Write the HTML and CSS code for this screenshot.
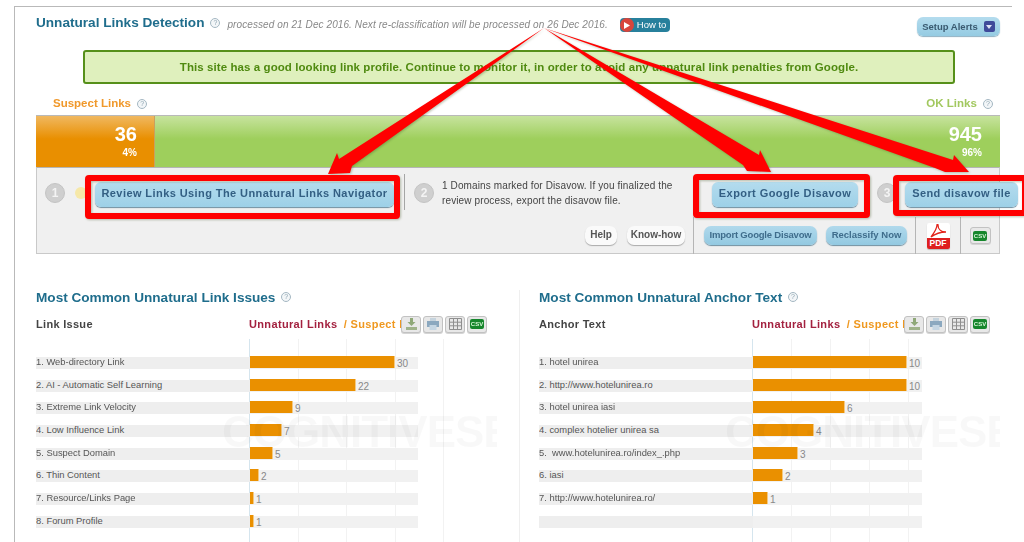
FILE: index.html
```html
<!DOCTYPE html>
<html lang="en">
<head>
<meta charset="utf-8">
<title>Unnatural Links Detection</title>
<link rel="stylesheet" href="styles.css">
</head>
<body>
<div class="page">
  <div class="frame">
    <header class="head">
      <h1 class="title">Unnatural Links Detection</h1>
      <span class="q q-title">?</span>
      <span class="processed">processed on 21 Dec 2016. Next re-classification will be processed on 26 Dec 2016.</span>
      <span class="howto"><span class="play"><svg width="6" height="7" viewBox="0 0 6 7"><path d="M0 0L6 3.5L0 7Z" fill="#fff"/></svg></span>How to</span>
      <span class="setup">Setup Alerts<span class="caret"><svg width="6" height="4" viewBox="0 0 6 4"><path d="M0 0H6L3 4Z" fill="#dfe3f5"/></svg></span></span>
    </header>
    <div class="alert">This site has a good looking link profile. Continue to monitor it, in order to avoid any unnatural link penalties from Google.</div>
    <div class="labels">
      <span class="lab-suspect">Suspect Links <span class="q">?</span></span>
      <span class="lab-ok">OK Links <span class="q">?</span></span>
    </div>
    <div class="meter">
      <div class="seg seg-suspect"><b>36</b><i>4%</i></div>
      <div class="seg seg-ok"><b>945</b><i>96%</i></div>
    </div>
    <div class="panel">
      <div class="steps">
        <span class="num">1</span>
        <span class="dot"></span>
        <span class="btn btn-review">Review Links Using The Unnatural Links Navigator</span>
        <span class="vline"></span>
        <span class="num num-2">2</span>
        <p class="note">1 Domains marked for Disavow. If you finalized the<br>review process, export the disavow file.</p>
        <span class="btn btn-export">Export Google Disavow</span>
        <span class="num num-3">3</span>
        <span class="btn btn-send">Send disavow file</span>
      </div>
      <div class="cells">
        <div class="cell cell-help">
          <span class="pill">Help</span>
          <span class="pill pill-know">Know-how</span>
        </div>
        <div class="cell cell-actions">
          <span class="btn-small btn-import">Import Google Disavow</span>
          <span class="btn-small btn-reclass">Reclassify Now</span>
        </div>
        <div class="cell cell-pdf">
          <span class="pdf">
            <svg class="pdf-mark" width="18" height="14" viewBox="0 0 18 14"><path d="M2 13C5 9 8 5 8 1C8 0 9 0 9 1C9 5 12 8 17 8C12 8 6 10 2 13Z" fill="none" stroke="#e2231a" stroke-width="1.3"/></svg>
            <span class="pdf-band">PDF</span>
          </span>
        </div>
        <div class="cell cell-csv"><span class="tool tool-csv-big"><span class="csv">CSV</span></span></div>
      </div>
    </div>
    <div class="charts">
      <section class="chart">
        <h2 class="chart-title">Most Common Unnatural Link Issues <span class="q">?</span></h2>
        <div class="chart-head">
          <span class="col-name">Link Issue</span>
          <span class="legend"><span class="leg-a">Unnatural Links</span> <span class="leg-b">/ Suspect Links</span></span>
          <span class="tools">
            <span class="tool"><svg width="13" height="12" viewBox="0 0 13 12"><path d="M5 0H8V4H10.500L6.500 8L2.500 4H5Z" fill="#8fa878"/><path d="M1 9H12V12H1Z" fill="#9fb28a"/></svg></span>
            <span class="tool"><svg width="14" height="12" viewBox="0 0 14 12"><path d="M4 0H10V3H4Z" fill="#c5d3dd"/><path d="M1 3H13V9H1Z" fill="#8ba8bf"/><path d="M3.500 7H10.500V12H3.500Z" fill="#c5d6e3"/></svg></span>
            <span class="tool"><svg width="13" height="12" viewBox="0 0 13 12"><path d="M.5 .5H12.500V11.500H.5ZM.5 4.200H12.500M.5 7.800H12.500M4.500 .5V11.500M8.500 .5V11.500" fill="none" stroke="#8f8f8f"/></svg></span>
            <span class="tool"><span class="csv">CSV</span></span>
          </span>
        </div>
        <div class="plot plot-left">
          <div class="grid"></div>
          <div class="row"><span class="label">1. Web-directory Link</span><span class="track"><span class="fill" style="width:144px"></span><span class="val">30</span></span></div>
          <div class="row"><span class="label">2. AI - Automatic Self Learning</span><span class="track"><span class="fill" style="width:105px"></span><span class="val">22</span></span></div>
          <div class="row"><span class="label">3. Extreme Link Velocity</span><span class="track"><span class="fill" style="width:42px"></span><span class="val">9</span></span></div>
          <div class="row"><span class="label">4. Low Influence Link</span><span class="track"><span class="fill" style="width:31px"></span><span class="val">7</span></span></div>
          <div class="row"><span class="label">5. Suspect Domain</span><span class="track"><span class="fill" style="width:22px"></span><span class="val">5</span></span></div>
          <div class="row"><span class="label">6. Thin Content</span><span class="track"><span class="fill" style="width:8px"></span><span class="val">2</span></span></div>
          <div class="row"><span class="label">7. Resource/Links Page</span><span class="track"><span class="fill" style="width:3px"></span><span class="val">1</span></span></div>
          <div class="row"><span class="label">8. Forum Profile</span><span class="track"><span class="fill" style="width:3px"></span><span class="val">1</span></span></div>
          <div class="mark">COGNITIVESEO</div>
        </div>
      </section>
      <section class="chart">
        <h2 class="chart-title">Most Common Unnatural Anchor Text <span class="q">?</span></h2>
        <div class="chart-head">
          <span class="col-name">Anchor Text</span>
          <span class="legend"><span class="leg-a">Unnatural Links</span> <span class="leg-b">/ Suspect Links</span></span>
          <span class="tools">
            <span class="tool"><svg width="13" height="12" viewBox="0 0 13 12"><path d="M5 0H8V4H10.500L6.500 8L2.500 4H5Z" fill="#8fa878"/><path d="M1 9H12V12H1Z" fill="#9fb28a"/></svg></span>
            <span class="tool"><svg width="14" height="12" viewBox="0 0 14 12"><path d="M4 0H10V3H4Z" fill="#c5d3dd"/><path d="M1 3H13V9H1Z" fill="#8ba8bf"/><path d="M3.500 7H10.500V12H3.500Z" fill="#c5d6e3"/></svg></span>
            <span class="tool"><svg width="13" height="12" viewBox="0 0 13 12"><path d="M.5 .5H12.500V11.500H.5ZM.5 4.200H12.500M.5 7.800H12.500M4.500 .5V11.500M8.500 .5V11.500" fill="none" stroke="#8f8f8f"/></svg></span>
            <span class="tool"><span class="csv">CSV</span></span>
          </span>
        </div>
        <div class="plot plot-right">
          <div class="grid"></div>
          <div class="row"><span class="label">1. hotel unirea</span><span class="track"><span class="fill" style="width:153px"></span><span class="val">10</span></span></div>
          <div class="row"><span class="label">2. http://www.hotelunirea.ro</span><span class="track"><span class="fill" style="width:153px"></span><span class="val">10</span></span></div>
          <div class="row"><span class="label">3. hotel unirea iasi</span><span class="track"><span class="fill" style="width:91px"></span><span class="val">6</span></span></div>
          <div class="row"><span class="label">4. complex hotelier unirea sa</span><span class="track"><span class="fill" style="width:60px"></span><span class="val">4</span></span></div>
          <div class="row"><span class="label">5. &nbsp;www.hotelunirea.ro/index_.php</span><span class="track"><span class="fill" style="width:44px"></span><span class="val">3</span></span></div>
          <div class="row"><span class="label">6. iasi</span><span class="track"><span class="fill" style="width:29px"></span><span class="val">2</span></span></div>
          <div class="row"><span class="label">7. http://www.hotelunirea.ro/</span><span class="track"><span class="fill" style="width:14px"></span><span class="val">1</span></span></div>
          <div class="row"><span class="label"></span><span class="track"></span></div>
          <div class="mark">COGNITIVESEO</div>
        </div>
      </section>
    </div>
  </div>
  <svg class="overlay" width="1024" height="542" viewBox="0 0 1024 542">
    <g fill="#f00">
      <path d="M544 28L339 159L337 153L328 174L350 173L352 166Z"/>
      <path d="M544 28L759 155L760 150L771 172L747 171L743 165Z"/>
      <path d="M544 28L953 160L954 155L969 172L945 172L935 168Z"/>
    </g>
    <g fill="none" stroke="#f00" stroke-width="6" stroke-linejoin="round">
      <rect x="88" y="178" width="309" height="38" rx="1"/>
      <rect x="696" y="177" width="171" height="38" rx="1"/>
      <rect x="896" y="178" width="129" height="35" rx="1"/>
    </g>
  </svg>
</div>
</body>
</html>
```
FILE: styles.css
```css
* { box-sizing: border-box; }
html, body { margin: 0; padding: 0; background: #fff; }
body { font-family: "Liberation Sans", Arial, sans-serif; color: #444; }

.page { position: relative; width: 1024px; height: 542px; overflow: hidden; padding: 6px 0 0 14px; }
.frame {
  width: 998px; height: 536px; padding: 8px 12px 0 21px;
  border-top: 1px solid #b9b9b9; border-left: 1px solid #b9b9b9;
  filter: blur(.35px);
}
.overlay { position: absolute; left: 0; top: 0; filter: drop-shadow(1px 1px 1px rgba(70, 90, 40, .35)); }

.q {
  display: inline-block; width: 10px; height: 10px; border: 1px solid #a4b7c2; border-radius: 50%;
  color: #8fa5b2; font: 400 7px/8px "Liberation Sans", sans-serif; text-align: center; vertical-align: 1px;
  letter-spacing: 0; background: #f3f6f8;
}

/* header */
.head { display: flex; align-items: flex-start; height: 35px; }
.title { margin: 0; font-size: 13.600px; line-height: 16px; font-weight: 700; color: #1f6d8c; }
.q-title { margin: 3px 0 0 6px; flex: none; }
.processed { margin: 3px 0 0 7px; font-size: 10px; line-height: 13px; font-style: italic; color: #888; white-space: nowrap; letter-spacing: .09px; }
.howto {
  display: flex; align-items: center; height: 14px; width: 50px; margin: 3px 0 0 12px; flex: none;
  background: #27809c; border-radius: 4px; color: #fff; font-size: 9.5px; line-height: 14px;
}
.play {
  display: flex; align-items: center; justify-content: center; width: 14px; height: 14px; margin-right: 3px;
  background: #d8453c; border-radius: 50%;
}
.setup {
  display: flex; align-items: center; justify-content: center; gap: 6px; height: 19px; width: 83px;
  margin: 2px 0 0 auto; flex: none; border-radius: 6px;
  background: linear-gradient(#b4dcee, #95cbe2); box-shadow: 0 1px 1px #8fb1c2;
  color: #3a5a70; font-size: 9.500px; font-weight: 700;
}
.caret {
  display: flex; align-items: center; justify-content: center; width: 11px; height: 11px;
  background: #3f4a9a; border-radius: 2px;
}

/* alert */
.alert {
  width: 872px; height: 34px; margin-left: 47px; border: 2px solid #56901a; border-radius: 3px;
  background: #dff0bd; color: #4f8a10; font-size: 11.500px; font-weight: 700; line-height: 30px; text-align: center; letter-spacing: .08px;
}

/* labels */
.labels { display: flex; justify-content: space-between; height: 14px; margin: 12px 0 5px; padding: 0 7px 0 17px; font-size: 11.500px; font-weight: 700; line-height: 14px; }
.lab-suspect { color: #f0982a; }
.lab-ok { color: #a2c85f; }
.labels .q { margin-left: 3px; }

/* meter */
.meter { display: flex; height: 52px; width: 964px; border-top: 1px solid #b9b9b9; }
.seg { display: flex; flex-direction: column; align-items: flex-end; padding: 8px 18px 0 0; color: #fff; }
.seg b { font-size: 20px; line-height: 20px; }
.seg i { font-size: 10px; line-height: 13px; font-style: normal; font-weight: 700; margin-top: 2px; }
.seg-suspect { width: 119px; padding-right: 17px; background: linear-gradient(#f0b860, #e98f00 45%); border-right: 1px solid #c9a060; }
.seg-ok { flex: 1; background: linear-gradient(#c7e39e, #9ecf5c 45%); }

/* action panel */
.panel { width: 964px; height: 87px; background: #f0f0f0; border: 1px solid #c9c9c9; border-top-color: #b5b5b5; }
.steps { display: flex; align-items: flex-start; height: 49px; padding-left: 8px; }
.num {
  width: 20px; height: 20px; flex: none; margin-top: 15px; border-radius: 50%; background: #cfcfcf;
  border: 1px solid #c4c4c4; color: #f4f4f4; font-size: 12px; font-weight: 700; line-height: 18px; text-align: center;
}
.dot { width: 12px; height: 12px; flex: none; margin: 19px 0 0 10px; border-radius: 50%; background: #f6e8a8; }
.btn {
  height: 25px; flex: none; margin-top: 14px; border-radius: 6px;
  background: linear-gradient(#b4dcee, #9dd0e7); box-shadow: 0 1px 1px #6f8fa0;
  color: #335f83; font-size: 11px; font-weight: 700; line-height: 23px; text-align: center; letter-spacing: .42px; white-space: nowrap;
}
.btn-review { width: 299px; margin-left: 8px; }
.vline { width: 1px; height: 36px; flex: none; margin: 6px 0 0 10px; background: #a5a5a5; }
.num-2 { margin-left: 9px; }
.note { width: 270px; margin: 10px 0 0 8px; flex: none; font-size: 10px; line-height: 15px; color: #444; white-space: nowrap; letter-spacing: .12px; }
.btn-export { width: 146px; }
.num-3 { margin-left: 19px; margin-top: 15px; }
.btn-send { width: 113px; margin-left: 8px; letter-spacing: .36px; }

.cells { display: flex; height: 37px; }
.cell { display: flex; align-items: center; height: 100%; border-left: 1px solid #b5b5b5; }
.cell-help { width: 656px; justify-content: flex-end; gap: 10px; padding-right: 8px; border-left: 0; }
.cell-actions { width: 222px; gap: 9px; padding-left: 10px; }
.cell-pdf { width: 45px; justify-content: center; }
.cell-csv { flex: 1; justify-content: center; }
.pill {
  height: 19px; width: 32px; border-radius: 7px; background: #fafafa; box-shadow: 0 1px 1px #aaa;
  color: #555; font-size: 10px; font-weight: 700; line-height: 18px; text-align: center;
}
.pill-know { width: 58px; }
.btn-small {
  height: 19px; border-radius: 7px; background: linear-gradient(#b0d9ec, #93c9e1); box-shadow: 0 1px 1px #6f8fa0;
  color: #3f6d8c; font-size: 9.500px; font-weight: 700; line-height: 18px; text-align: center; white-space: nowrap;
}
.btn-import { width: 113px; letter-spacing: -.2px; }
.btn-reclass { width: 81px; }
.pdf { display: flex; flex-direction: column; align-items: center; width: 23px; height: 26px; background: #fff; border-radius: 2px; box-shadow: 0 1px 1px #bbb; overflow: hidden; }
.pdf-mark { flex: none; margin-top: 1px; }
.pdf-band { width: 100%; margin-top: auto; height: 11px; background: #de1f1f; color: #fff; font-size: 8.500px; line-height: 11px; font-weight: 700; text-align: center; }

/* tools */
.tool {
  display: flex; align-items: center; justify-content: center; width: 20px; height: 17px; flex: none;
  background: #e8e8e8; border: 1px solid #c2c2c2; border-radius: 3px; box-shadow: 0 1px 0 #d5d5d5;
}
.tool-csv-big { width: 21px; height: 17px; }
.csv { width: 14px; height: 10px; background: #16862c; border-radius: 2px; color: #d6f5d6; font-size: 6px; font-weight: 700; line-height: 10px; text-align: center; }

/* charts */
.charts { display: flex; margin-top: 36px; position: relative; }
.chart { width: 503px; flex: none; position: relative; }
.chart + .chart::before { content: ""; position: absolute; left: -20px; top: 0; bottom: -20px; width: 1px; background: #efefef; }
.chart-title { margin: 0; height: 15px; font-size: 13.600px; line-height: 15px; font-weight: 700; color: #1f6d8c; }
.chart-title .q { margin-left: 2px; vertical-align: 3px; }
.chart-head { display: flex; align-items: center; height: 18px; margin-top: 10px; font-size: 11px; font-weight: 700; }
.col-name { width: 213px; flex: none; color: #444; letter-spacing: .3px; }
.legend { width: 152px; flex: none; overflow: hidden; white-space: nowrap; letter-spacing: .35px; }
.leg-a { color: #a3213f; }
.leg-b { color: #ef981f; margin-left: 3px; }
.tools { display: flex; gap: 2px; flex: none; }

.plot { position: relative; height: 210px; margin-top: 6px; padding-top: 18px; display: flex; flex-direction: column; gap: 10.700px; }
.grid { position: absolute; left: 213px; top: 0; bottom: 0; border-left: 1px solid #d5e5ee; }
.plot-left .grid { width: 195px; background: repeating-linear-gradient(90deg, transparent 0 47.500px, #f2f2f2 47.500px 48.500px); }
.plot-right .grid { width: 195px; background: repeating-linear-gradient(90deg, transparent 0 38.000px, #f2f2f2 38.000px 39.000px); }
.row { position: relative; display: flex; height: 12px; flex: none; width: 382px; }
.plot-right .row { width: 383px; }
.label { width: 214px; flex: none; background: #eee; color: #555; font-size: 9.400px; line-height: 10px; white-space: nowrap; overflow: hidden; }
.track { flex: 1; display: flex; background: #f1f1f1; }
.fill { display: block; height: 12px; margin-top: -1px; background: #ea9000; box-shadow: 1px 0 0 #f4c880; }
.val { margin: 1px 0 0 3px; color: #888; font-size: 10px; line-height: 12px; }
.mark {
  position: absolute; left: 186px; top: 75px; width: 275px; height: 36px; overflow: hidden; white-space: nowrap;
  color: rgba(0, 0, 0, .028); font-size: 44px; font-weight: 700; line-height: 36px; letter-spacing: -1px; pointer-events: none;
}
```
